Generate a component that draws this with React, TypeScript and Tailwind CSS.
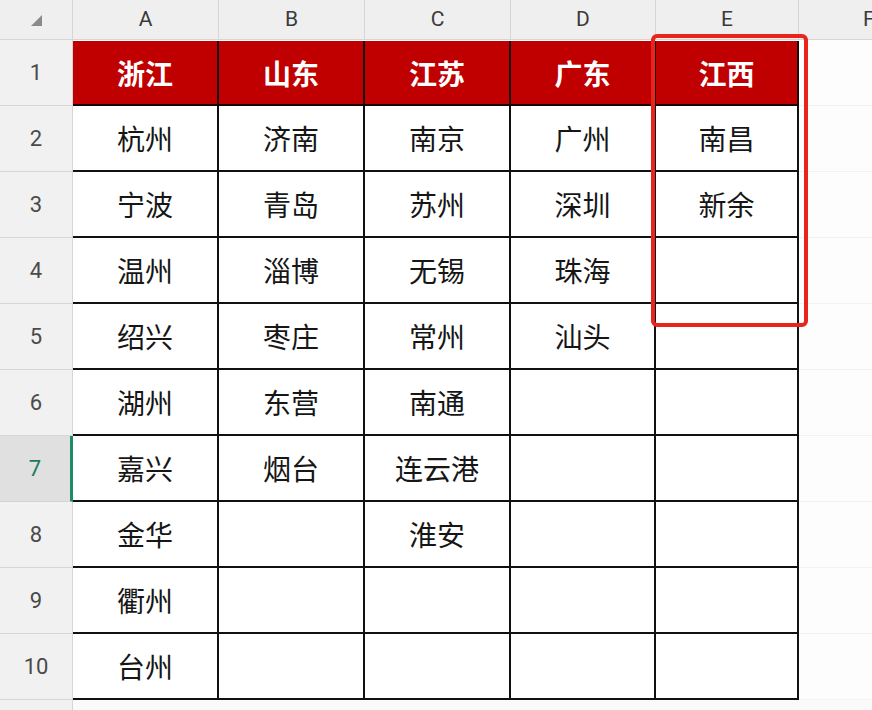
import React from "react";

const cols = ["A", "B", "C", "D", "E"];
const heads = ["浙江", "山东", "江苏", "广东", "江西"];

// 每列的城市，按行排列
const data: string[][] = [
  ["杭州", "宁波", "温州", "绍兴", "湖州", "嘉兴", "金华", "衢州", "台州"],
  ["济南", "青岛", "淄博", "枣庄", "东营", "烟台"],
  ["南京", "苏州", "无锡", "常州", "南通", "连云港", "淮安"],
  ["广州", "深圳", "珠海", "汕头"],
  ["南昌", "新余"],
];

const cjk = { fontFamily: '"Noto Sans CJK SC", "Noto Sans", sans-serif' };
const latin = { fontFamily: 'Roboto, "Noto Sans", "Liberation Sans", sans-serif' };

export default function App() {
  return (
    <div className="relative h-[710px] w-[872px] overflow-hidden bg-white">
      <div className="grid h-full grid-cols-[73px_146px_146px_146px_145px_143px_1fr] grid-rows-[40px_repeat(10,66px)_1fr]">
        {/* 左上角 */}
        <div className="flex items-end justify-end border-b border-r border-[#d6d6d6] bg-[#efefef] pb-[13px] pr-[30px]">
          <svg width="11" height="11" viewBox="0 0 11 11">
            <path d="M11 0 L11 11 L0 11 Z" fill="#8a8a8a" />
          </svg>
        </div>
        {/* 列标题 */}
        {cols.map((c) => (
          <div
            key={c}
            style={latin}
            className="flex items-center justify-center border-b border-r border-[#d6d6d6] bg-[#efefef] text-[21px] text-[#3a3a3a]"
          >
            {c}
          </div>
        ))}
        <div
          style={latin}
          className="flex items-center overflow-hidden whitespace-nowrap border-b border-[#d6d6d6] bg-[#efefef] pl-[64px] text-[21px] text-[#3a3a3a]"
        >
          F
        </div>

        {Array.from({ length: 10 }).map((_, r) => (
          <React.Fragment key={r}>
            <div
              style={latin}
              className={`flex items-center justify-center border-b text-[22px] ${
                r === 6
                  ? "border-r-[3px] border-b-[#d2d2d2] border-r-[#1f8a68] bg-[#e0e0e0] text-[#1f7a5c]"
                  : "border-r border-[#d6d6d6] bg-[#f1f1f1] text-[#4a4a4a]"
              }`}
            >
              {r + 1}
            </div>
            {cols.map((_, c) =>
              r === 0 ? (
                <div
                  key={c}
                  style={cjk}
                  className="mt-px flex items-center justify-center border-b-2 border-r-2 border-[#1a0505] bg-[#c00000] text-[28px] font-bold text-white"
                >
                  {heads[c]}
                </div>
              ) : (
                <div
                  key={c}
                  style={cjk}
                  className="flex items-center justify-center border-b-2 border-r-2 border-[#111] bg-white text-[28px] text-[#161616]"
                >
                  {data[c][r - 1] ?? ""}
                </div>
              )
            )}
            <div className="border-b border-[#f2f2f2] bg-[#fdfdfd]" />
          </React.Fragment>
        ))}

        <div className="border-r border-[#d6d6d6] bg-[#f1f1f1]" />
        <div className="col-span-6 bg-[#fafafa]" />
      </div>

      {/* 红色标注框 */}
      <div className="absolute left-[651px] top-[34px] h-[293px] w-[157px] rounded-[6px] border-4 border-[#e8241c]" />
    </div>
  );
}
